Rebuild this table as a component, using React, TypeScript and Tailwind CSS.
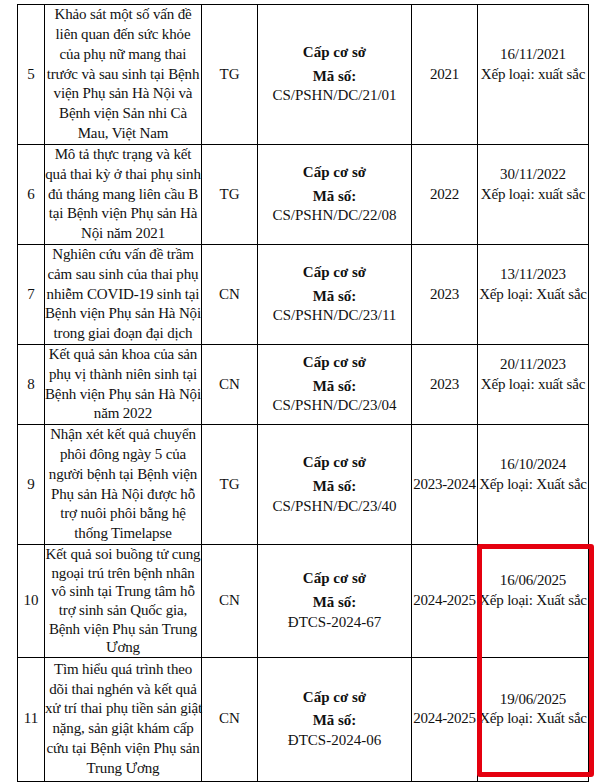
import React from "react";

type Row = {
  no: string;
  title: string[];
  role: string;
  code: string;
  year: string;
  date: string;
  grade: string;
  h: string;
  lead: string;
};

const rows: Row[] = [
  {
    no: "5",
    title: [
      "Khảo sát một số vấn đề",
      "liên quan đến sức khỏe",
      "của phụ nữ mang thai",
      "trước và sau sinh tại Bệnh",
      "viện Phụ sản Hà Nội và",
      "Bệnh viện Sản nhi Cà",
      "Mau, Việt Nam",
    ],
    role: "TG",
    code: "CS/PSHN/DC/21/01",
    year: "2021",
    date: "16/11/2021",
    grade: "Xếp loại: xuất sắc",
    h: "h-[140px]",
    lead: "leading-[19.8px]",
  },
  {
    no: "6",
    title: [
      "Mô tả thực trạng và kết",
      "quả thai kỳ ở thai phụ sinh",
      "đủ tháng mang liên cầu B",
      "tại Bệnh viện Phụ sản Hà",
      "Nội năm 2021",
    ],
    role: "TG",
    code: "CS/PSHN/DC/22/08",
    year: "2022",
    date: "30/11/2022",
    grade: "Xếp loại: xuất sắc",
    h: "h-[99px]",
    lead: "leading-[19.8px]",
  },
  {
    no: "7",
    title: [
      "Nghiên cứu vấn đề trầm",
      "cảm sau sinh của thai phụ",
      "nhiễm COVID-19 sinh tại",
      "Bệnh viện Phụ sản Hà Nội",
      "trong giai đoạn đại dịch",
    ],
    role: "CN",
    code: "CS/PSHN/DC/23/11",
    year: "2023",
    date: "13/11/2023",
    grade: "Xếp loại: Xuất sắc",
    h: "h-[100px]",
    lead: "leading-[19.8px]",
  },
  {
    no: "8",
    title: [
      "Kết quả sản khoa của sản",
      "phụ vị thành niên sinh tại",
      "Bệnh viện Phụ sản Hà Nội",
      "năm 2022",
    ],
    role: "CN",
    code: "CS/PSHN/DC/23/04",
    year: "2023",
    date: "20/11/2023",
    grade: "Xếp loại: xuất sắc",
    h: "h-[80px]",
    lead: "leading-[19.8px]",
  },
  {
    no: "9",
    title: [
      "Nhận xét kết quả chuyển",
      "phôi đông ngày 5 của",
      "người bệnh tại Bệnh viện",
      "Phụ sản Hà Nội được hỗ",
      "trợ nuôi phôi bằng hệ",
      "thống Timelapse",
    ],
    role: "TG",
    code: "CS/PSHN/ĐC/23/40",
    year: "2023-2024",
    date: "16/10/2024",
    grade: "Xếp loại: Xuất sắc",
    h: "h-[120px]",
    lead: "leading-[19.8px]",
  },
  {
    no: "10",
    title: [
      "Kết quả soi buồng tử cung",
      "ngoại trú trên bệnh nhân",
      "vô sinh tại Trung tâm hỗ",
      "trợ sinh sản Quốc gia,",
      "Bệnh viện Phụ sản Trung",
      "Ương",
    ],
    role: "CN",
    code: "ĐTCS-2024-67",
    year: "2024-2025",
    date: "16/06/2025",
    grade: "Xếp loại: Xuất sắc",
    h: "h-[112px]",
    lead: "leading-[18.6px]",
  },
  {
    no: "11",
    title: [
      "Tìm hiểu quá trình theo",
      "dõi thai nghén và kết quả",
      "xử trí thai phụ tiền sản giật",
      "nặng, sản giật khám cấp",
      "cứu tại Bệnh viện Phụ sản",
      "Trung Ương",
    ],
    role: "CN",
    code: "ĐTCS-2024-06",
    year: "2024-2025",
    date: "19/06/2025",
    grade: "Xếp loại: Xuất sắc",
    h: "h-[124px]",
    lead: "leading-[19.8px]",
  },
];

const td = "border border-black p-0 text-center align-middle whitespace-nowrap overflow-visible";

export default function App() {
  return (
    <div
      className="relative w-[603px] h-[784px] bg-white text-[#111] text-[15px] leading-[19.8px]"
      style={{ fontFamily: '"Liberation Serif", "Times New Roman", serif' }}
    >
      <div className="pt-[4px] pl-[17px]">
        <table className="table-fixed border-collapse w-[572px]">
          <colgroup>
            <col className="w-[27px]" />
            <col className="w-[157px]" />
            <col className="w-[56px]" />
            <col className="w-[154px]" />
            <col className="w-[66px]" />
            <col className="w-[111px]" />
          </colgroup>
          <tbody>
            {rows.map((r) => (
              <tr key={r.no}>
                <td className={`${td} ${r.h}`}>{r.no}</td>
                <td className={`${td} ${r.lead} tracking-[-0.15px]`}>
                  {r.title.map((l, i) => (
                    <div key={i}>{l}</div>
                  ))}
                </td>
                <td className={td}>{r.role}</td>
                <td className={td}>
                  <div className="font-bold mb-[4px]">Cấp cơ sở</div>
                  <div className="font-bold">Mã số:</div>
                  <div>{r.code}</div>
                </td>
                <td className={`${td} tracking-[-0.3px]`}>{r.year}</td>
                <td className={`${td} tracking-[-0.2px]`}>
                  <div>{r.date}</div>
                  <div>{r.grade}</div>
                  <div>&nbsp;</div>
                </td>
              </tr>
            ))}
          </tbody>
        </table>
      </div>
      <div className="absolute left-[477px] top-[544px] w-[117px] h-[233px] border-[5px] border-[#e5000f] rounded-[3px]" />
    </div>
  );
}
